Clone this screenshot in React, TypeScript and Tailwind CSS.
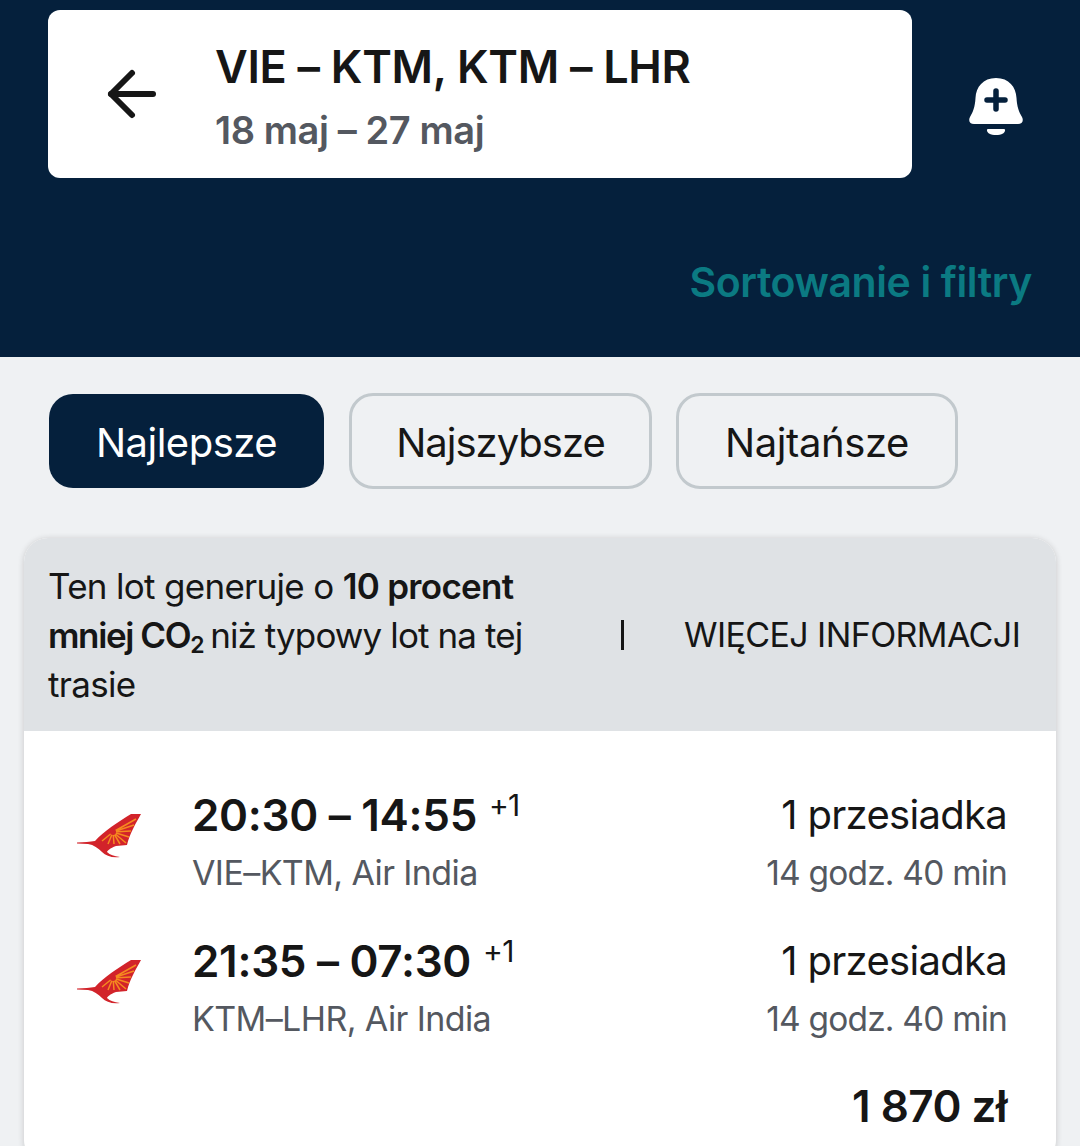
import { ArrowLeft } from 'lucide-react'

const font = { fontFamily: 'Inter, "Noto Sans", sans-serif' }

function BellPlus() {
  return (
    <svg width="56" height="62" viewBox="0 0 56 62" aria-hidden="true">
      <path
        d="M28 2C15 2 8 11 7.500 22C7 31 5 36 2 41C0 45 2 48 6 48H50C54 48 56 45 54 41C51 36 49 31 48.500 22C48 11 41 2 28 2Z"
        fill="#fff"
      />
      <path d="M20 53H36C38 53 37 56 35 57.500C31 59.500 25 59.500 21 57.500C19 56 18 53 20 53Z" fill="#fff" />
      <path d="M28 15V33M19 24H37" stroke="#05203c" strokeWidth="5.500" strokeLinecap="round" fill="none" />
    </svg>
  )
}

function AirIndiaTail() {
  return (
    <svg width="66" height="46" viewBox="0 0 66 46" aria-hidden="true">
      <path
        d="M55 1H65C60 10 54 20 51 32L40 33C34 35 31 38 31 39C34 42 38 43 44 44C36 45 30 43 26 39C22 35 18 32 12 31L1 30.500V29.500C8 29 14 29 19 28C28 18 42 9 55 1Z"
        fill="#d2232a"
      />
      <g stroke="#f58a1f" strokeWidth="1.500" fill="none">
        <path d="M37 19L60 6M37 19L58 12M37 19L55 18M37 19L53 24M37 19L50 30M37 19L44 31M37 19L38 31M37 19L32 31M37 19L26 28" />
      </g>
      <circle cx="37" cy="19" r="3" fill="#d2232a" />
    </svg>
  )
}

function FlightRow({ times, plus, route }: { times: string; plus: string; route: string }) {
  return (
    <div className="flex items-center">
      <div className="flex w-[168px] shrink-0 justify-start pb-[8px] pl-[52px]">
        <AirIndiaTail />
      </div>
      <div className="flex-1">
        <div className="flex h-[58px] items-center text-[44px] font-semibold tracking-[-0.3px] text-[#161616]">
          {times}
          <span className="-mt-[20px] ml-[12px] text-[30px] font-normal tracking-[-0.8px]">{plus}</span>
        </div>
        <div className="mt-[8px] h-[42px] text-[34px] leading-[42px] tracking-[-0.6px] text-[#545860]">{route}</div>
      </div>
      <div className="text-right">
        <div className="h-[58px] text-[40px] leading-[58px] tracking-[-0.7px] text-[#161616]">1 przesiadka</div>
        <div className="mt-[8px] h-[42px] text-[33.5px] leading-[42px] tracking-[-0.8px] text-[#545860]">14 godz. 40 min</div>
      </div>
    </div>
  )
}

export default function App() {
  return (
    <div className="h-[1146px] w-[1080px] overflow-hidden bg-[#eff1f3]" style={font}>
      <header className="h-[357px] bg-[#05203c] px-[48px] pt-[10px]">
        <div className="flex items-center">
          <div className="flex h-[168px] w-[864px] items-center rounded-[12px] bg-white">
            <ArrowLeft className="ml-[48px] text-[#161616]" size={72} strokeWidth={2} />
            <div className="ml-[47px] pt-[4px]">
              <div className="text-[45px] leading-[58px] font-semibold tracking-[-0.3px] text-[#161616]">VIE – KTM, KTM – LHR</div>
              <div className="mt-[10px] text-[38px] leading-[48px] font-semibold tracking-[-0.4px] text-[#545860]">18 maj – 27 maj</div>
            </div>
          </div>
          <div className="mt-[26px] ml-[56px]">
            <BellPlus />
          </div>
        </div>
        <div className="mt-[80px] text-right">
          <span className="text-[41px] leading-[48px] font-semibold tracking-[-0.4px] text-[#0b7a82]">Sortowanie i filtry</span>
        </div>
      </header>

      <div className="flex items-center gap-[24px] px-[49px] pt-[36px]">
        <button type="button" className="mr-[1px] flex h-[94px] w-[275px] items-center justify-center rounded-[24px] bg-[#05203c] pt-[3px] text-[40px] tracking-[-0.5px] text-white">
          Najlepsze
        </button>
        <button type="button" className="flex h-[96px] w-[303px] items-center justify-center rounded-[24px] border-[3px] border-[#c2c9cd] pt-[3px] text-[40px] tracking-[-1px] text-[#161616]">
          Najszybsze
        </button>
        <button type="button" className="flex h-[96px] w-[282px] items-center justify-center rounded-[24px] border-[3px] border-[#c2c9cd] pt-[3px] text-[40px] tracking-[-0.4px] text-[#161616]">
          Najtańsze
        </button>
      </div>

      <section className="mx-[24px] mt-[49px] h-[626px] overflow-hidden rounded-[24px] bg-white shadow-[0_1px_6px_rgba(37,32,31,0.2)]">
        <div className="flex h-[193px] items-center bg-[#dfe2e5] pl-[24px] text-[35px] leading-[48px] tracking-[-0.7px] text-[#161616]">
          <div className="w-[522px]">
            <p>
              Ten lot generuje o <b className="font-semibold">10 procent</b>
            </p>
            <p className="mt-[1px] tracking-[-0.9px]">
              <b className="font-semibold tracking-[-1.4px]">
                mniej CO<sub className="mr-[-2px] text-[23px]">2</sub>
              </b>{' '}
              niż typowy lot na tej
            </p>
            <p className="mt-[1px]">trasie</p>
          </div>
          <div className="ml-[51px] h-[30px] w-[3px] bg-[#161616]" />
          <div className="ml-[60px] text-[34px] tracking-[-0.6px]">WIĘCEJ INFORMACJI</div>
        </div>
        <div className="pt-[55px] pr-[49px]">
          <FlightRow times="20:30 – 14:55" plus="+1" route="VIE–KTM, Air India" />
          <div className="h-[38px]" />
          <FlightRow times="21:35 – 07:30" plus="+1" route="KTM–LHR, Air India" />
          <div className="mt-[37px] text-right text-[44px] leading-[58px] font-semibold tracking-[-0.5px] text-[#161616]">1 870 zł</div>
        </div>
      </section>
    </div>
  )
}
